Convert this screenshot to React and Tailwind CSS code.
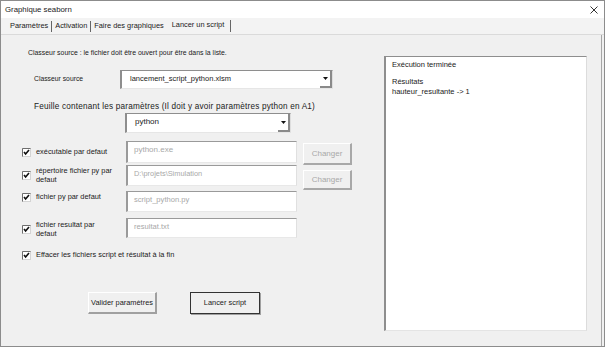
import React from "react";

const font = { fontFamily: '"Liberation Sans", Arial, sans-serif' };

function Check() {
  return (
    <svg width="9" height="9" viewBox="0 0 9 9" className="shrink-0">
      <rect x="0.5" y="0.5" width="8" height="8" fill="#ffffff" stroke="#d4d4d4" />
      <path d="M0.5 8.5 V0.5 H8.5" fill="none" stroke="#6e6e6e" />
      <path d="M2 4 L3.6 6 L7 2" fill="none" stroke="#111" strokeWidth="1.6" />
    </svg>
  );
}

function Combo({ value, className, textClass }) {
  return (
    <div className={`flex bg-white border-l-2 border-t border-[#8e8e8e] border-r border-b border-r-[#dedede] border-b-[#e6e6e6] ${className}`}>
      <div className={`flex-1 pl-[8px] pt-[2px] text-[#222] whitespace-nowrap ${textClass}`}>{value}</div>
      <div className="w-[12px] flex items-center justify-center border-r-2 border-b-2 border-[#8a8a8a] bg-white">
        <svg width="5" height="3" viewBox="0 0 5 3">
          <path d="M0 0 H5 L2.5 3 Z" fill="#111" />
        </svg>
      </div>
    </div>
  );
}

function Field({ value, className, textClass }) {
  return (
    <div className={`bg-white border-l-2 border-t border-[#9a9a9a] border-r border-b border-r-[#e0e0e0] border-b-[#e8e8e8] pl-[6px] pt-[2px] text-[#a8a8a8] whitespace-nowrap ${textClass} ${className}`}>
      {value}
    </div>
  );
}

function GrayButton({ label, className }) {
  return (
    <div className={`flex items-center justify-center bg-[#f0f0f0] border-l border-t border-white border-r-2 border-b-2 border-r-[#a8a8a8] border-b-[#a8a8a8] text-[8px] text-[#a8a8a8] ${className}`}>
      {label}
    </div>
  );
}

export default function App() {
  return (
    <div className="w-[605px] h-[347px] bg-[#f0f0f0] border border-[#8c8c8c] flex flex-col overflow-hidden text-[#1a1a1a]" style={font}>
      <div className="h-[17px] bg-white flex items-center justify-between pl-[4px] pr-[6px] text-[7.8px] shrink-0">
        <span>Graphique seaborn</span>
        <svg width="8" height="8" viewBox="0 0 8 8">
          <path d="M0.5 0.5 L7.5 7.5 M7.5 0.5 L0.5 7.5" stroke="#333" strokeWidth="1" />
        </svg>
      </div>

      <div className="h-[17px] shrink-0 flex items-center pl-[9px] text-[7.4px] border-b border-[#dadada] bg-[#f3f3f3]">
        <span>Paramètres</span>
        <span className="w-px h-[11px] bg-[#666] mx-[3px]" />
        <span>Activation</span>
        <span className="w-px h-[11px] bg-[#666] mx-[3px]" />
        <span>Faire des graphiques</span>
        <span className="ml-[8px] -mt-[3px]">Lancer un script</span>
        <span className="w-px h-[12px] bg-[#666] ml-[6px]" />
      </div>

      <div className="flex-1 flex mr-[2px] border-r border-[#a6a6a6]">
        <div className="w-[383px] shrink-0 flex flex-col text-[7.4px]">
          <div className="mt-[13px] ml-[27px] h-[10px] leading-[10px] text-[6.9px] whitespace-nowrap">
            Classeur source : le fichier doit être ouvert pour être dans la liste.
          </div>

          <div className="mt-[12px] flex items-center h-[19px]">
            <span className="ml-[33px] w-[86px] text-[6.8px]">Classeur source</span>
            <Combo value="lancement_script_python.xlsm" textClass="text-[7.5px]" className="w-[213px] h-[19px]" />
          </div>

          <div className="mt-[13px] ml-[33px] h-[10px] leading-[10px] text-[8.2px] tracking-[0.2px] whitespace-nowrap">
            Feuille contenant les paramètres (Il doit y avoir paramètres python en A1)
          </div>

          <Combo value="python" textClass="text-[8px]" className="mt-[1px] ml-[124px] w-[166px] h-[20px]" />

          <div className="mt-[8px] flex items-start h-[22px]">
            <div className="ml-[21px] w-[104px] flex items-center gap-[5px] pt-[6px] leading-[10px]">
              <Check />
              <span>exécutable par defaut</span>
            </div>
            <Field value="python.exe" textClass="text-[8px]" className="w-[171px] h-[22px]" />
            <GrayButton label="Changer" className="ml-[6px] mt-[2px] w-[49px] h-[22px]" />
          </div>

          <div className="mt-[2px] flex items-start h-[21px]">
            <div className="ml-[21px] w-[104px] flex items-center gap-[5px] pt-[1px] leading-[9px]">
              <Check />
              <span>répertoire fichier py par<br />defaut</span>
            </div>
            <Field value="D:\projets\Simulation" textClass="text-[7.4px]" className="w-[171px] h-[21px]" />
            <GrayButton label="Changer" className="ml-[6px] mt-[5px] w-[49px] h-[20px]" />
          </div>

          <div className="mt-[5px] flex items-start h-[21px]">
            <div className="ml-[21px] w-[104px] flex items-center gap-[5px] pt-[1px] leading-[10px]">
              <Check />
              <span>fichier py par defaut</span>
            </div>
            <Field value="script_python.py" textClass="text-[7.6px]" className="w-[171px] h-[21px]" />
          </div>

          <div className="mt-[6px] flex items-start h-[20px]">
            <div className="ml-[21px] w-[104px] flex items-center gap-[5px] pt-[2px] leading-[9px]">
              <Check />
              <span>fichier resultat par<br />defaut</span>
            </div>
            <Field value="resultat.txt" textClass="text-[7.6px]" className="w-[171px] h-[20px]" />
          </div>

          <div className="mt-[12px] ml-[21px] flex items-center gap-[5px] h-[10px] whitespace-nowrap">
            <Check />
            <span>Effacer les fichiers script et résultat à la fin</span>
          </div>

          <div className="mt-[32px] flex whitespace-nowrap">
            <div className="ml-[87px] w-[69px] h-[22px] flex items-center justify-center bg-[#f0f0f0] border-l border-t border-white border-r-2 border-b-2 border-r-[#a0a0a0] border-b-[#a0a0a0]">
              Valider paramètres
            </div>
            <div className="ml-[33px] w-[70px] h-[22px] flex items-center justify-center bg-[#f0f0f0] border border-[#333] shadow-[1px_1px_0_#a0a0a0]">
              Lancer script
            </div>
          </div>
        </div>

        <div className="mt-[21px] w-[203px] h-[275px] bg-white border-l-2 border-t border-[#8e8e8e] border-r border-b border-r-[#dcdcdc] border-b-[#e4e4e4] pl-[6px] pt-[3px] text-[7.5px] leading-[10px]">
          <div>Exécution terminée</div>
          <div className="mt-[7px]">Résultats</div>
          <div>hauteur_resultante -&gt; 1</div>
        </div>
      </div>
    </div>
  );
}
